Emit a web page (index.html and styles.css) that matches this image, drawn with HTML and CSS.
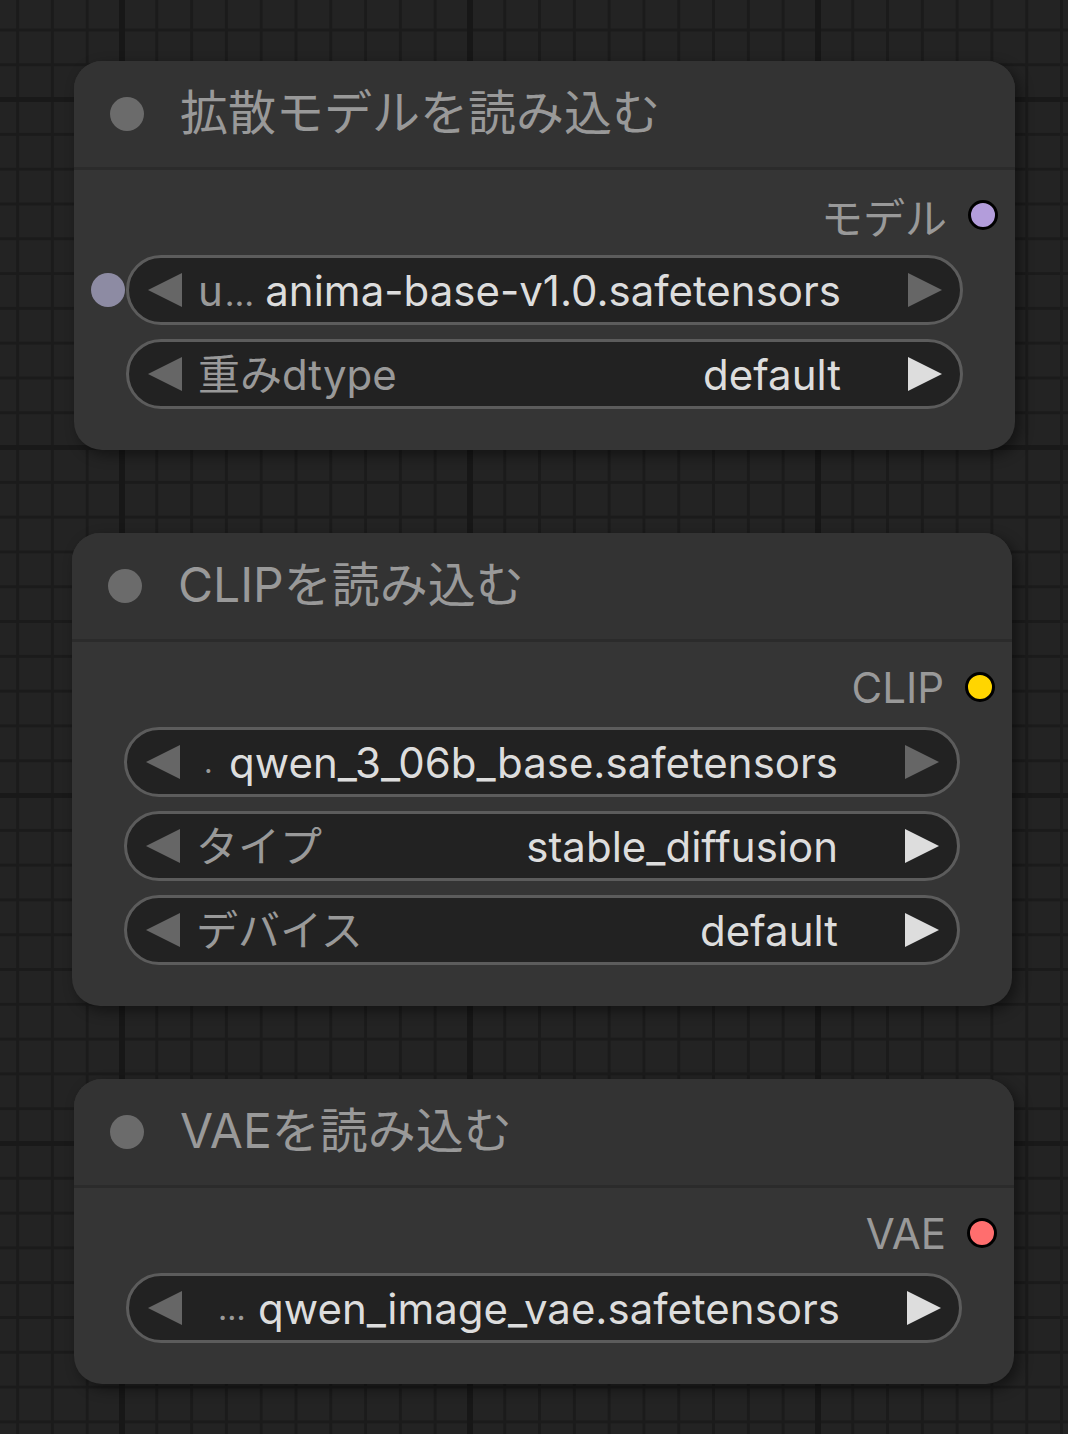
FILE: index.html
```html
<!DOCTYPE html>
<html lang="ja">
<head>
    <meta charset="UTF-8">
    <meta name="viewport" content="width=device-width, initial-scale=1.0">
    <title>ワークフロー</title>
    <link rel="stylesheet" href="styles.css">
</head>
<body>
    <!-- Graph canvas with loader nodes -->
    <div class="canvas">

        <!-- Diffusion model loader -->
        <section class="node node-unet">
            <header class="node-title">
                <span class="title-dot"></span>
                <h2>拡散モデルを読み込む</h2>
            </header>
            <div class="node-body">
                <div class="output">
                    <span class="output-label">モデル</span>
                    <span class="slot slot-model"></span>
                </div>
                <div class="widget linked">
                    <span class="input-slot"></span>
                    <svg class="arrow" viewBox="0 0 34 34"><polygon points="34,0 0,17 34,34"/></svg>
                    <span class="w-label">u<small>…</small></span>
                    <span class="w-value">anima-base-v1.0.safetensors</span>
                    <svg class="arrow" viewBox="0 0 34 34"><polygon points="0,0 34,17 0,34"/></svg>
                </div>
                <div class="widget">
                    <svg class="arrow" viewBox="0 0 34 34"><polygon points="34,0 0,17 34,34"/></svg>
                    <span class="w-label cjk">重みdtype</span>
                    <span class="w-value">default</span>
                    <svg class="arrow active" viewBox="0 0 34 34"><polygon points="0,0 34,17 0,34"/></svg>
                </div>
            </div>
        </section>

        <!-- Text encoder loader -->
        <section class="node node-clip">
            <header class="node-title">
                <span class="title-dot"></span>
                <h2>CLIPを読み込む</h2>
            </header>
            <div class="node-body">
                <div class="output">
                    <span class="output-label">CLIP</span>
                    <span class="slot slot-clip"></span>
                </div>
                <div class="widget">
                    <svg class="arrow" viewBox="0 0 34 34"><polygon points="34,0 0,17 34,34"/></svg>
                    <span class="w-label tiny">.</span>
                    <span class="w-value">qwen_3_06b_base.safetensors</span>
                    <svg class="arrow" viewBox="0 0 34 34"><polygon points="0,0 34,17 0,34"/></svg>
                </div>
                <div class="widget">
                    <svg class="arrow" viewBox="0 0 34 34"><polygon points="34,0 0,17 34,34"/></svg>
                    <span class="w-label cjk">タイプ</span>
                    <span class="w-value">stable_diffusion</span>
                    <svg class="arrow active" viewBox="0 0 34 34"><polygon points="0,0 34,17 0,34"/></svg>
                </div>
                <div class="widget">
                    <svg class="arrow" viewBox="0 0 34 34"><polygon points="34,0 0,17 34,34"/></svg>
                    <span class="w-label cjk">デバイス</span>
                    <span class="w-value">default</span>
                    <svg class="arrow active" viewBox="0 0 34 34"><polygon points="0,0 34,17 0,34"/></svg>
                </div>
            </div>
        </section>

        <!-- VAE loader -->
        <section class="node node-vae">
            <header class="node-title">
                <span class="title-dot"></span>
                <h2>VAEを読み込む</h2>
            </header>
            <div class="node-body">
                <div class="output">
                    <span class="output-label">VAE</span>
                    <span class="slot slot-vae"></span>
                </div>
                <div class="widget">
                    <svg class="arrow" viewBox="0 0 34 34"><polygon points="34,0 0,17 34,34"/></svg>
                    <span class="w-label dots">…</span>
                    <span class="w-value">qwen_image_vae.safetensors</span>
                    <svg class="arrow active" viewBox="0 0 34 34"><polygon points="0,0 34,17 0,34"/></svg>
                </div>
            </div>
        </section>

    </div>
</body>
</html>
```

FILE: styles.css
```css
* {
    margin: 0;
    padding: 0;
    box-sizing: border-box;
}

body {
    font-family: Inter, "Noto Sans CJK JP", sans-serif;
    background: #232323;
    overflow: hidden;
}

/* Canvas with minor and major grid lines */
.canvas {
    position: relative;
    width: 1068px;
    height: 1434px;
    background-color: #232323;
    background-image:
        linear-gradient(to right, #171717 6px, transparent 6px),
        linear-gradient(to bottom, #191919 5px, transparent 5px),
        linear-gradient(to right, #1b1b1b 3px, transparent 3px),
        linear-gradient(to bottom, #1b1b1b 3px, transparent 3px);
    background-size: 348px 348px, 348px 348px, 34.8px 34.8px, 34.8px 34.8px;
    background-position: 119px 0, 0 97px, 120.5px 0, 0 28.5px;
}

/* Nodes */
.node {
    position: absolute;
    width: 940px;
    background: #353535;
    border-radius: 28px;
    box-shadow: 5px 5px 14px rgba(0, 0, 0, 0.45);
}

.node-unet {
    left: 74px;
    top: 61px;
    width: 941px;
}

.node-clip {
    left: 72px;
    top: 533px;
}

.node-vae {
    left: 74px;
    top: 1079px;
}

.node-title {
    height: 109px;
    display: flex;
    align-items: center;
    border-bottom: 3px solid #2b2b2b;
    background: #333333;
    border-radius: 28px 28px 0 0;
}

.title-dot {
    width: 34px;
    height: 34px;
    margin-left: 36px;
    border-radius: 50%;
    background: #6b6b6b;
}

.node-title h2 {
    margin-left: 36px;
    padding-bottom: 10px;
    font-size: 48px;
    font-weight: 400;
    color: #999999;
    white-space: nowrap;
}

.node-body {
    padding: 20px 0 41px;
    display: flex;
    flex-direction: column;
    gap: 14px;
}

/* Output slot row */
.output {
    height: 50px;
    margin-bottom: 1px;
    display: flex;
    justify-content: flex-end;
    align-items: center;
    padding-right: 17px;
}

.output-label {
    font-size: 42px;
    color: #999999;
    margin-right: 21px;
}

.slot {
    width: 30px;
    height: 30px;
    border-radius: 50%;
    border: 3px solid #000;
}

.slot-model {
    background: #b39ddb;
}

.slot-clip {
    background: #ffd500;
}

.slot-vae {
    background: #ff6e6e;
}

/* Combo widgets */
.widget {
    position: relative;
    height: 70px;
    margin: 0 52px;
    display: flex;
    align-items: center;
    padding: 0 18px 0 19px;
    background: #222222;
    border: 3px solid #5c5c5c;
    border-radius: 35px;
    font-size: 42px;
    white-space: nowrap;
}

.arrow {
    flex: none;
    width: 34px;
    height: 34px;
    fill: #666666;
}

.arrow.active {
    fill: #dddddd;
}

.w-label {
    margin-left: 16px;
    color: #999999;
}

.w-label small {
    font-size: 34px;
    margin-left: 2px;
}

.w-label.cjk {
    padding-bottom: 6px;
}

.w-label.tiny {
    font-size: 30px;
    margin-left: 24px;
}

.w-label.dots {
    font-size: 32px;
    margin-left: 36px;
}

.w-value {
    flex: 1;
    text-align: right;
    margin-right: 67px;
    color: #dddddd;
}

/* Linked input sitting on the widget edge */
.input-slot {
    position: absolute;
    left: -38px;
    top: 50%;
    width: 34px;
    height: 34px;
    margin-top: -17px;
    border-radius: 50%;
    background: #8d8ba3;
}
```
